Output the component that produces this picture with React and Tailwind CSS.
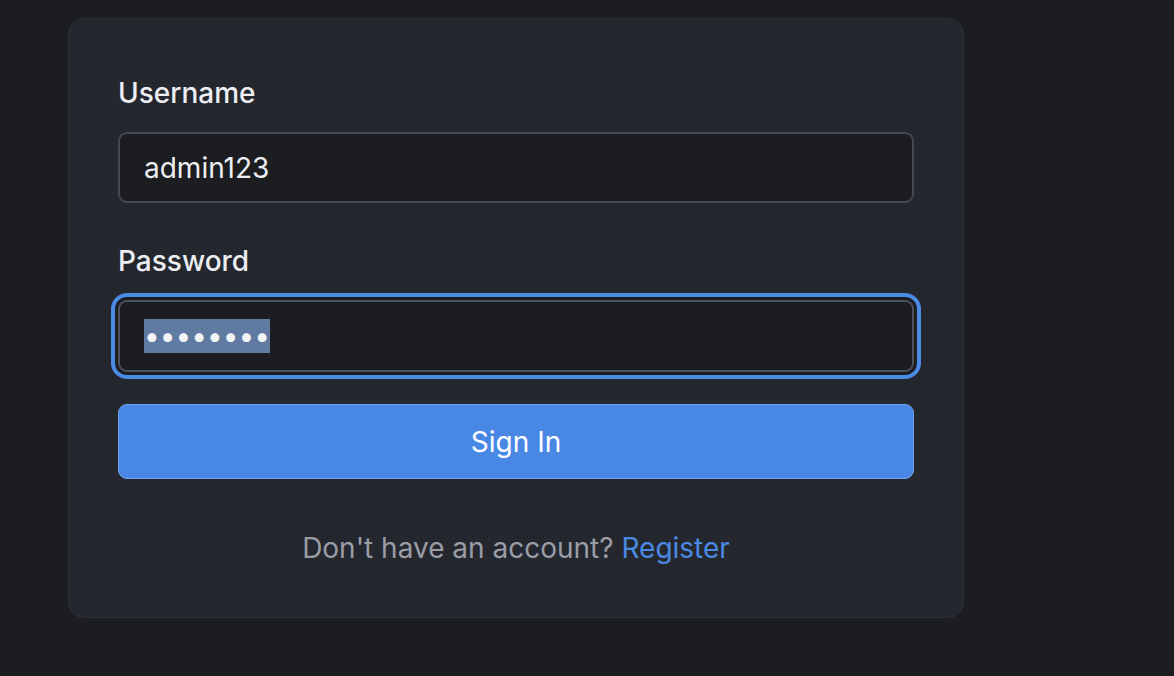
import React from 'react';

export default function App() {
  const dots = Array.from({ length: 8 });
  return (
    <div className="min-h-screen w-full bg-[#1c1d21] pl-[68px] pt-[18px]" style={{ fontFamily: 'Inter, "Noto Sans", sans-serif' }}>
      <div className="w-[896px] rounded-[16px] border border-[#2d3038] bg-[#25272f] px-[49px] pt-[56px] pb-[51px]">
        <label className="block text-[28px] leading-[36px] font-medium text-[#eceef2]">Username</label>
        <div className="mt-[21px] flex h-[71px] items-center rounded-[9px] border-2 border-[#444851] bg-[#1c1d21] pl-[24px] text-[28px] text-[#eceef2]">
          admin123
        </div>

        <label className="mt-[40px] block text-[28px] leading-[36px] font-medium text-[#eceef2]">Password</label>
        <div className="mt-[21px] flex h-[72px] items-center rounded-[9px] border-2 border-[#4c5059] bg-[#1c1d21] pl-[24px] ring-4 ring-[#4a8be6] ring-offset-3 ring-offset-[#1c1d21]">
          <span className="flex h-[34px] w-[126px] items-center bg-[#5f7ba1] text-[28px] leading-none text-[#f4f5f7]">
            {dots.map((_, i) => (
              <span key={i} className="flex w-[15.75px] justify-center">•</span>
            ))}
          </span>
        </div>

        <button className="mt-[32px] flex h-[75px] w-full items-center justify-center rounded-[9px] border border-[#6fa3ee] bg-[#4888e4] text-[28px] text-white">
          Sign In
        </button>

        <p className="mt-[51px] text-center text-[28px] leading-[36px] text-[#9a9da6]">
          Don't have an account? <a className="text-[#4a8ae2]">Register</a>
        </p>
      </div>
    </div>
  );
}
